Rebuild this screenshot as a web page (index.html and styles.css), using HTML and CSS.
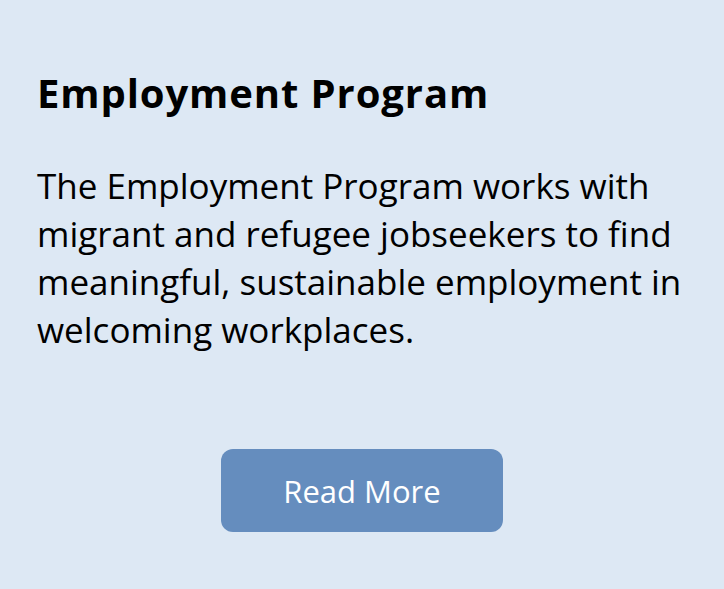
FILE: index.html
```html
<!DOCTYPE html>
<html lang="en">
<head>
<meta charset="utf-8">
<title>Employment Program</title>
<link rel="stylesheet" href="styles.css">
</head>
<body>
<section class="card">
  <h1 class="card-title">Employment Program</h1>
  <p class="card-text">The Employment Program works with migrant and refugee jobseekers to find meaningful, sustainable employment in welcoming workplaces.</p>
  <div class="card-actions">
    <a class="btn" href="#">Read More</a>
  </div>
</section>
</body>
</html>
```
FILE: styles.css
```css
html, body {
  margin: 0;
  padding: 0;
  background: #dde8f4;
}
body {
  font-family: "Open Sans", "Noto Sans", sans-serif;
  color: #000;
}
.card {
  box-sizing: border-box;
  width: 724px;
  height: 589px;
  padding: 70px 37px 0 37px;
  display: flex;
  flex-direction: column;
}
.card-title {
  margin: 0;
  font-size: 40px;
  line-height: 46px;
  font-weight: 700;
  letter-spacing: 0.9px;
}
.card-text {
  margin: 46px 0 0 0;
  font-size: 35px;
  line-height: 48px;
  font-weight: 400;
}
.card-actions {
  margin-top: 95px;
  display: flex;
  justify-content: center;
}
.btn {
  width: 282px;
  height: 83px;
  border-radius: 12px;
  background: #658dbe;
  color: #fff;
  text-decoration: none;
  font-size: 31px;
  display: flex;
  align-items: center;
  justify-content: center;
}
```
